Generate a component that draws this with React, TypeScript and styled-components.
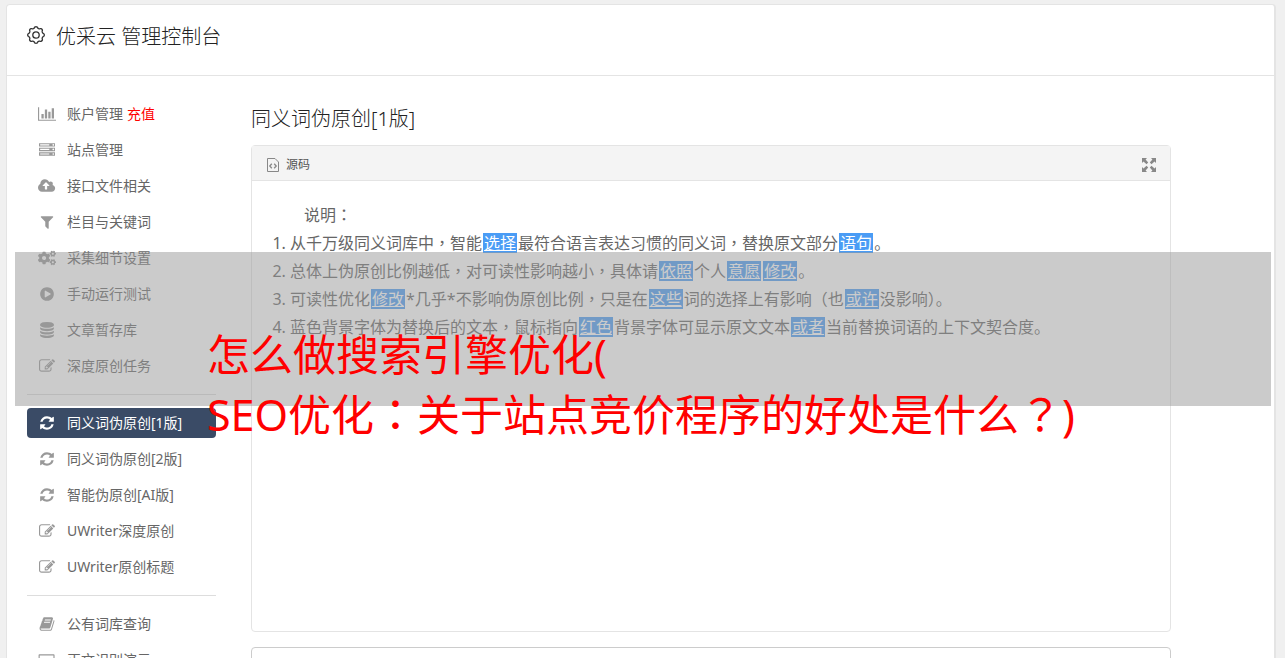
import React from "react";
import styled, { createGlobalStyle, css } from "styled-components";
import { FaCogs } from "react-icons/fa";

const Global = createGlobalStyle`
  *, *::before, *::after { box-sizing: border-box; }
  body {
    margin: 0;
    background: #f0f0f0;
    color: #666;
    font: 14px/30px "Noto Sans", "Noto Sans CJK SC", sans-serif;
  }
`;

const Page = styled.div`
  position: relative;
  padding: 4px 9px 0 6px;
  height: 100vh;
  overflow: hidden;
`;

const Card = styled.div`
  min-height: 100vh;
  background: #fff;
  border: 1px solid #e4e4e4;
  border-right-width: 2px;
  border-radius: 4px;
`;

const Header = styled.header`
  display: flex;
  align-items: center;
  gap: 10px;
  height: 71px;
  padding: 0 19px 10px;
  border-bottom: 1px solid #e4e4e4;
  color: #222;
`;

const Title = styled.h1`
  margin: 0;
  padding-top: 3px;
  font-size: 20px;
  line-height: 30px;
  font-weight: 300;
`;

const Body = styled.div`
  display: flex;
  gap: 35px;
  padding: 23px 103px 0 20px;
`;

const Sidebar = styled.nav`
  flex: 0 0 189px;
`;

const NavLink = styled.a<{ $active?: boolean }>`
  display: flex;
  align-items: center;
  gap: 10px;
  height: 30px;
  margin-bottom: 6px;
  padding-left: 10px;
  border-radius: 4px;
  color: #666;
  text-decoration: none;
  white-space: nowrap;
  svg { color: #999; }
  ${(p) => p.$active && css`
    background: #3a4b66;
    color: #fff;
    svg { color: #fff; }
  `}
`;

const IconSlot = styled.span`
  display: flex;
  justify-content: center;
  align-items: center;
  width: 20px;
  height: 20px;
`;

const Recharge = styled.span`
  margin-left: 4px;
  color: #f00;
`;

const Divider = styled.hr`
  height: 1px;
  margin: 13px 0;
  border: 0;
  background: #ddd;
`;

const Main = styled.main`
  flex: 1;
  min-width: 0;
`;

const Heading = styled.h2`
  margin: 5px 0 11px;
  font-size: 20px;
  line-height: 30px;
  font-weight: 300;
  color: #222;
`;

const Editor = styled.section`
  border: 1px solid #e4e4e4;
  border-radius: 4px;
`;

const Toolbar = styled.div`
  display: flex;
  justify-content: space-between;
  align-items: center;
  height: 35px;
  padding: 3px 12px 0 13px;
  border-bottom: 1px solid #e4e4e4;
  background: #f4f4f4;
`;

const ToolButton = styled.button`
  display: flex;
  align-items: center;
  gap: 7px;
  padding: 0 2px;
  border: 0;
  background: none;
  color: #555;
  font: inherit;
  font-size: 12px;
  svg { color: #888; }
`;

const Document = styled.div`
  min-height: 450px;
  padding: 20px;
  font-size: 16px;
  line-height: 28px;
`;

const Intro = styled.p`
  margin: 0;
  text-indent: 2em;
`;

const Rules = styled.ol`
  margin: 0;
  padding-left: 18px;
`;

const Swap = styled.mark`
  display: inline-block;
  margin: 4px 1px 0;
  padding: 0 1px;
  background: #4a9cf5;
  color: #fff;
  line-height: 20px;
  text-decoration: underline;
  vertical-align: top;
`;

/* Punctuation centred in its square */
const Mid = styled.span`
  font-family: "Noto Sans CJK TC", sans-serif;
  line-height: 0;
`;

const Output = styled.textarea`
  display: block;
  width: 100%;
  height: 200px;
  margin-top: 15px;
  border: 1px solid #ccc;
  border-radius: 4px;
  resize: none;
`;

const Band = styled.div`
  position: absolute;
  top: 252px;
  left: 15px;
  right: 14px;
  height: 154px;
  background: rgba(151, 151, 151, 0.5);
`;

const Caption = styled.p`
  position: absolute;
  top: 73px;
  left: 192px;
  margin: 0;
  color: #f00;
  font-size: 43px;
  line-height: 60px;
  white-space: nowrap;
`;

type GlyphName = "chart" | "server" | "cloud" | "filter" | "play" | "database" | "edit" | "refresh" | "book" | "laptop";

const glyphs: Record<GlyphName, { width: number; d: string }> = {
  chart: { width: 2048, d: "M640 896v512h-256v-512h256zm384-512v1024h-256v-1024h256zm1024 1152v128h-2048v-1536h128v1408h1920zm-640-896v768h-256v-768h256zm384-384v1152h-256v-1152h256z" },
  server: { width: 1792, d: "M128 1408h1024v-128h-1024v128zm0-512h1024v-128h-1024v128zm1568 448q0-40-28-68t-68-28-68 28-28 68 28 68 68 28 68-28 28-68zm-1568-960h1024v-128h-1024v128zm1568 448q0-40-28-68t-68-28-68 28-28 68 28 68 68 28 68-28 28-68zm0-512q0-40-28-68t-68-28-68 28-28 68 28 68 68 28 68-28 28-68zm96 832v384h-1792v-384h1792zm0-512v384h-1792v-384h1792zm0-512v384h-1792v-384h1792z" },
  cloud: { width: 1920, d: "M1280 864q0-14-9-23l-352-352q-9-9-23-9t-23 9l-351 351q-10 12-10 24 0 14 9 23t23 9h224v352q0 13 9.500 22.500t22.500 9.500h192q13 0 22.500-9.500t9.500-22.500v-352h224q13 0 22.500-9.500t9.500-22.500zm640 288q0 159-112.500 271.500t-271.500 112.500h-1088q-185 0-316.500-131.500t-131.500-316.500q0-130 70-240t188-165q-2-30-2-43 0-212 150-362t362-150q156 0 285.500 87t188.500 231q71-62 166-62 106 0 181 75t75 181q0 76-41 138 130 31 213.500 135.500t83.500 238.500z" },
  filter: { width: 1792, d: "M1595 295q17 41-14 70l-493 493v742q0 42-39 59-13 5-25 5-27 0-45-19l-256-256q-19-19-19-45v-486l-493-493q-31-29-14-70 17-39 59-39h1280q42 0 59 39z" },
  play: { width: 1792, d: "M896 128q209 0 385.500 103t279.500 279.500 103 385.500-103 385.500-279.500 279.500-385.500 103-385.500-103-279.500-279.500-103-385.500 103-385.500 279.500-279.500 385.500-103zm384 823q32-18 32-55t-32-55l-544-320q-31-19-64-1-32 19-32 56v640q0 37 32 56 16 8 32 8 17 0 32-9z" },
  database: { width: 1792, d: "M896 768q237 0 443-43t325-127v170q0 69-103 128t-280 93.500-385 34.500-385-34.500-280-93.500-103-128v-170q119 84 325 127t443 43zm0 768q237 0 443-43t325-127v170q0 69-103 128t-280 93.500-385 34.500-385-34.500-280-93.500-103-128v-170q119 84 325 127t443 43zm0-384q237 0 443-43t325-127v170q0 69-103 128t-280 93.500-385 34.500-385-34.500-280-93.500-103-128v-170q119 84 325 127t443 43zm0-1152q208 0 385 34.500t280 93.500 103 128v128q0 69-103 128t-280 93.500-385 34.500-385-34.500-280-93.500-103-128v-128q0-69 103-128t280-93.500 385-34.500z" },
  edit: { width: 1792, d: "M888 1184l116-116-152-152-116 116v56h96v96h56zm440-720q-16-16-33 1l-350 350q-17 17-1 33t33-1l350-350q17-17 1-33zm80 594v190q0 119-84.500 203.500t-203.500 84.500h-832q-119 0-203.500-84.500t-84.500-203.500v-832q0-119 84.500-203.500t203.500-84.500h832q63 0 117 25 15 7 18 23 3 17-9 29l-49 49q-14 14-32 8-23-6-45-6h-832q-66 0-113 47t-47 113v832q0 66 47 113t113 47h832q66 0 113-47t47-113v-126q0-13 9-22l64-64q15-15 35-7t20 29zm-96-738l288 288-672 672h-288v-288zm444 132l-92 92-288-288 92-92q28-28 68-28t68 28l152 152q28 28 28 68t-28 68z" },
  refresh: { width: 1792, d: "M1639 1056q0 5-1 7-64 268-268 434.500t-478 166.500q-146 0-282.500-55t-243.500-157l-129 129q-19 19-45 19t-45-19-19-45v-448q0-26 19-45t45-19h448q26 0 45 19t19 45-19 45l-137 137q71 66 161 102t187 36q134 0 250-65t186-179q11-17 53-117 8-23 30-23h192q13 0 22.500 9.500t9.500 22.500zm25-800v448q0 26-19 45t-45 19h-448q-26 0-45-19t-19-45 19-45l138-138q-148-137-349-137-134 0-250 65t-186 179q-11 17-53 117-8 23-30 23h-199q-13 0-22.500-9.500t-9.500-22.500v-7q65-268 270-434.500t480-166.500q146 0 284 55.500t245 156.500l130-129q19-19 45-19t45 19 19 45z" },
  book: { width: 1792, d: "M1703 478q40 57 18 129l-275 906q-19 64-76.500 107.500t-122.500 43.500h-923q-77 0-148.500-53.500t-99.500-131.500q-24-67-2-127 0-4 3-27t4-37q1-8-3-21.500t-3-19.500q2-11 8-21t16.500-23.500 16.500-23.500q23-38 45-91.500t30-91.500q3-10 .500-30t-.500-28q3-11 17-28t17-23q21-36 42-92t25-90q1-9-2.500-32t.500-28q4-13 22-30.500t22-22.500q19-26 42.500-84.500t27.500-96.500q1-8-3-25.500t-2-26.500q2-8 9-18t18-23 17-21q8-12 16.500-30.500t15-35 16-36 19.500-32 26.500-23.500 36-11.500 47.500 5.500l-1 3q38-9 51-9h761q74 0 114 56t18 130l-274 906q-36 119-71.500 153.500t-128.500 34.500h-869q-27 0-38 15-11 16-1 43 24 70 144 70h923q29 0 56-15.500t35-41.500l300-987q7-22 5-57 38 15 59 43zm-1064 2q-4 13 2 22.500t20 9.500h608q13 0 25.500-9.500t16.500-22.500l21-64q4-13-2-22.500t-20-9.500h-608q-13 0-25.500 9.500t-16.500 22.500zm-83 256q-4 13 2 22.500t20 9.500h608q13 0 25.500-9.500t16.500-22.500l21-64q4-13-2-22.500t-20-9.500h-608q-13 0-25.500 9.500t-16.500 22.500z" },
  laptop: { width: 1920, d: "M160 256h1600q96 0 96 96v960h-1792v-960q0-96 96-96zm32 128v800h1536v-800zM0 1408h1920v96q0 96-160 96h-1600q-160 0-160-96z" },
};

function Glyph({ name }: { name: GlyphName }) {
  const { width, d } = glyphs[name];
  return (
    <svg width={(width * 16) / 1792} height="16" viewBox={`0 0 ${width} 1792`} fill="currentColor" fillRule={name === "laptop" ? "evenodd" : "nonzero"} aria-hidden="true">
      <path d={d} />
    </svg>
  );
}

function gearOutline(teeth: number, radius: number, depth: number) {
  const points: string[] = [];
  for (let i = 0; i < 96; i++) {
    const angle = (i / 96) * Math.PI * 2;
    const wave = Math.cos(angle * teeth);
    const r = radius + depth * Math.sign(wave) * Math.sqrt(Math.abs(wave));
    points.push(`${(10 + r * Math.cos(angle)).toFixed(2)} ${(10 + r * Math.sin(angle)).toFixed(2)}`);
  }
  return `M${points.join("L")}Z`;
}

function GearIcon() {
  return (
    <svg width="20" height="20" viewBox="0 0 20 20" fill="none" stroke="#333" strokeWidth="1.3" strokeLinejoin="round" aria-hidden="true">
      <path d={gearOutline(8, 7.6, 0.7)} />
      <circle cx="10" cy="10" r="3.2" />
    </svg>
  );
}

function SourceIcon() {
  return (
    <svg width="12" height="14" viewBox="0 0 12 14" fill="none" stroke="currentColor" aria-hidden="true">
      <path d="M.5.5h7.500l3.500 3.500v9.500h-11z" />
      <path d="M4.800 5.800L2.800 8l2 2.200M7.200 5.800l2 2.200-2 2.200" strokeWidth="1.300" />
    </svg>
  );
}

function FullscreenIcon() {
  return (
    <svg width="14" height="14" viewBox="0 0 14 14" fill="currentColor" aria-hidden="true">
      {[0, 90, 180, 270].map((turn) => (
        <path key={turn} transform={`rotate(${turn} 7 7)`} d="M0 0h5L3.600 1.500 6.200 4.500 4.500 6.200 1.500 3.600 0 5z" />
      ))}
    </svg>
  );
}

type Item = { label: string; icon: GlyphName | "cogs"; active?: boolean; extra?: string };

const groups: Item[][] = [
  [
    { label: "账户管理", icon: "chart", extra: "充值" },
    { label: "站点管理", icon: "server" },
    { label: "接口文件相关", icon: "cloud" },
    { label: "栏目与关键词", icon: "filter" },
    { label: "采集细节设置", icon: "cogs" },
    { label: "手动运行测试", icon: "play" },
    { label: "文章暂存库", icon: "database" },
    { label: "深度原创任务", icon: "edit" },
  ],
  [
    { label: "同义词伪原创[1版]", icon: "refresh", active: true },
    { label: "同义词伪原创[2版]", icon: "refresh" },
    { label: "智能伪原创[AI版]", icon: "refresh" },
    { label: "UWriter深度原创", icon: "edit" },
    { label: "UWriter原创标题", icon: "edit" },
  ],
  [
    { label: "公有词库查询", icon: "book" },
    { label: "正文识别演示", icon: "laptop" },
  ],
];

const Comma = () => <Mid>，</Mid>;
const Colon = () => <Mid>：</Mid>;

export default function App() {
  return (
    <Page>
      <Global />
      <Card>
        <Header>
          <GearIcon />
          <Title>优采云 管理控制台</Title>
        </Header>
        <Body>
          <Sidebar>
            {groups.map((items, index) => (
              <React.Fragment key={index}>
                {index > 0 && <Divider />}
                {items.map((item) => (
                  <NavLink key={item.label} href="#" $active={item.active}>
                    <IconSlot>{item.icon === "cogs" ? <FaCogs size={18} /> : <Glyph name={item.icon} />}</IconSlot>
                    <span>
                      {item.label}
                      {item.extra && <Recharge>{item.extra}</Recharge>}
                    </span>
                  </NavLink>
                ))}
              </React.Fragment>
            ))}
          </Sidebar>
          <Main>
            <Heading>同义词伪原创[1版]</Heading>
            <Editor>
              <Toolbar>
                <ToolButton type="button"><SourceIcon />源码</ToolButton>
                <ToolButton type="button" aria-label="全屏"><FullscreenIcon /></ToolButton>
              </Toolbar>
              <Document>
                <Intro>说明<Colon /></Intro>
                <Rules>
                  <li>从千万级同义词库中<Comma />智能<Swap>选择</Swap>最符合语言表达习惯的同义词<Comma />替换原文部分<Swap>语句</Swap>。</li>
                  <li>总体上伪原创比例越低<Comma />对可读性影响越小<Comma />具体请<Swap>依照</Swap>个人<Swap>意愿</Swap><Swap>修改</Swap>。</li>
                  <li>可读性优化<Swap>修改</Swap>*几乎*不影响伪原创比例<Comma />只是在<Swap>这些</Swap>词的选择上有影响（也<Swap>或许</Swap>没影响）。</li>
                  <li>蓝色背景字体为替换后的文本<Comma />鼠标指向<Swap>红色</Swap>背景字体可显示原文文本<Swap>或者</Swap>当前替换词语的上下文契合度。</li>
                </Rules>
              </Document>
            </Editor>
            <Output aria-label="正文" />
          </Main>
        </Body>
      </Card>
      <Band>
        <Caption>怎么做搜索引擎优化(<br />SEO优化<Colon />关于站点竞价程序的好处是什么<Mid>？</Mid>)</Caption>
      </Band>
    </Page>
  );
}
